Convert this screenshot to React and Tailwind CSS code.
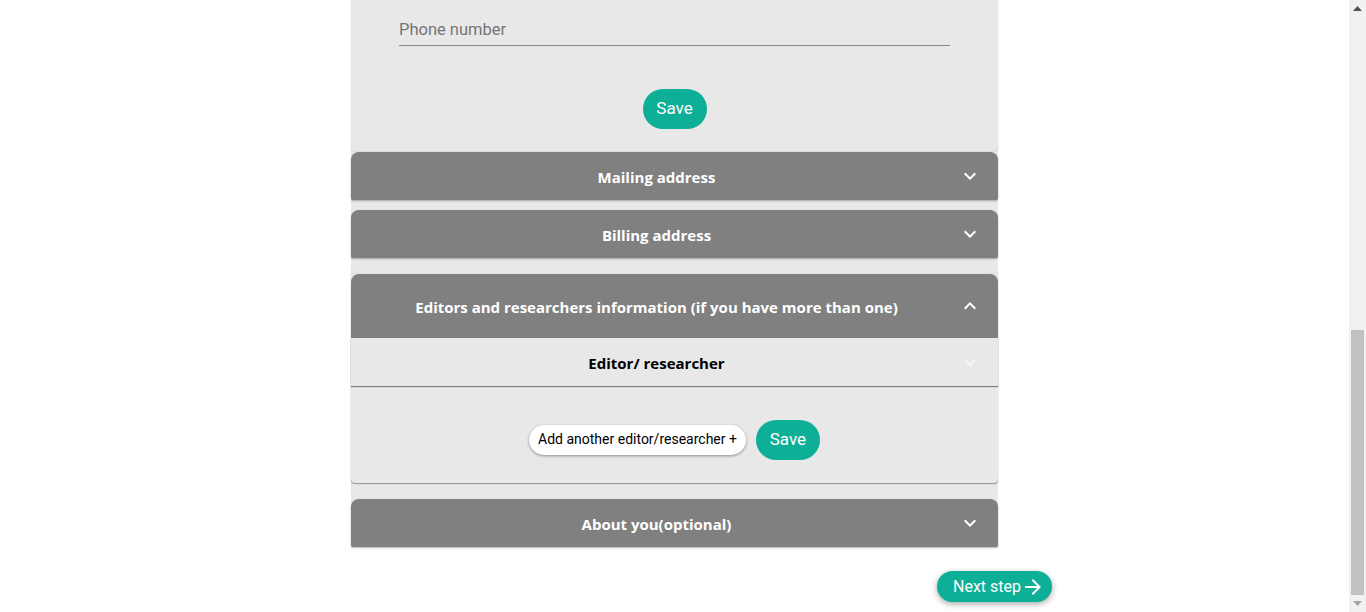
import React from "react";

const Chevron = ({ up = false, className = "" }) => (
  <svg viewBox="0 0 24 24" width="24" height="24" className={className} style={up ? { transform: "rotate(180deg)" } : undefined} fill="currentColor">
    <path d="M16.59 8.59 12 13.17 7.41 8.59 6 10l6 6 6-6z" />
  </svg>
);

const Header = ({ title, up = false, tall = false }) => (
  <div className={`flex items-center rounded-t-[8px] bg-[#808080] px-4 text-white ${tall ? "h-[64px]" : "h-[48px] rounded-b-[2px] shadow-[0_1px_2px_rgba(0,0,0,0.3)]"}`}>
    <span className="flex-1 pt-[2px] text-center text-[15px] font-bold" style={{ fontFamily: "'Open Sans', sans-serif" }}>{title}</span>
    <span className="-mr-3 p-3">
      <Chevron up={up} className="block" />
    </span>
  </div>
);

export default function App() {
  return (
    <div className="flex h-screen overflow-hidden bg-white" style={{ fontFamily: "Roboto, sans-serif" }}>
      <div className="flex min-w-0 flex-1 flex-col">
        <div className="mx-auto w-[647px] bg-[#e8e8e8]">
          <div className="rounded-b-[4px] bg-[#e8e8e8] pb-[22px] pt-[18px] shadow-[0_0_1px_rgba(0,0,0,0.35)]">
            <div className="mx-12">
              <div className="border-b border-[#8a8a8a] pb-[3px] text-[16.5px] leading-[24px] text-[#757575]">Phone number</div>
            </div>
            <div className="mt-[43px] flex justify-center">
              <button className="h-10 w-16 rounded-full bg-[#0daf96] text-[17px] text-white">Save</button>
            </div>
          </div>
          <div className="pt-px">
            <Header title="Mailing address" />
          </div>
          <div className="pt-[10px]">
            <Header title="Billing address" />
          </div>
          <div className="pt-4">
            <div className="rounded-b-[4px] bg-[#e8e8e8] shadow-[0_1px_1px_rgba(0,0,0,0.35),0_0_1px_rgba(0,0,0,0.3)]">
              <Header title="Editors and researchers information (if you have more than one)" up tall />
              <div className="flex h-[48px] items-center bg-[#e8e8e8] px-4 shadow-[0_1px_1px_rgba(0,0,0,0.45)]">
                <span className="flex-1 pt-[2px] text-center text-[15px] font-bold text-black" style={{ fontFamily: "'Open Sans', sans-serif" }}>Editor/ researcher</span>
                <span className="-mr-3 p-3">
                  <Chevron className="block text-[#f6f6f6]" />
                </span>
              </div>
              <div className="flex h-[97px] items-center justify-center gap-[10px] pt-[10px]">
                <button className="h-[30px] rounded-full bg-white px-[9px] text-[14px] text-black shadow-[0_1px_3px_rgba(0,0,0,0.4)]">Add another editor/researcher +</button>
                <button className="h-10 w-16 rounded-full bg-[#0daf96] text-[17px] text-white">Save</button>
              </div>
            </div>
          </div>
          <div className="pt-4">
            <Header title="About you(optional)" />
          </div>
        </div>
        <div className="mx-auto flex w-[755px] justify-end pt-6">
          <button className="flex h-[31px] items-center rounded-full bg-[#0daf96] pl-4 pr-[7px] text-[16px] text-white shadow-[0_2px_6px_rgba(0,0,0,0.35)]">
            <span>Next step</span>
            <svg viewBox="0 0 24 24" width="24" height="24" fill="currentColor"><path d="m12 4-1.41 1.41L16.17 11H4v2h12.17l-5.58 5.59L12 20l8-8z" /></svg>
          </button>
        </div>
      </div>
      <div className="flex w-[17px] flex-none flex-col bg-[#f1f1f1]">
        <div className="flex h-[17px] items-center justify-center">
          <svg width="9" height="5" viewBox="0 0 9 5"><path d="M0 5 4.5 0 9 5z" fill="#505050" /></svg>
        </div>
        <div className="flex flex-1 flex-col justify-end">
          <div className="mx-[2px] h-[265px] bg-[#c1c1c1]" />
        </div>
        <div className="flex h-[17px] items-center justify-center">
          <svg width="9" height="5" viewBox="0 0 9 5"><path d="M0 0h9L4.5 5z" fill="#a3a3a3" /></svg>
        </div>
      </div>
    </div>
  );
}
